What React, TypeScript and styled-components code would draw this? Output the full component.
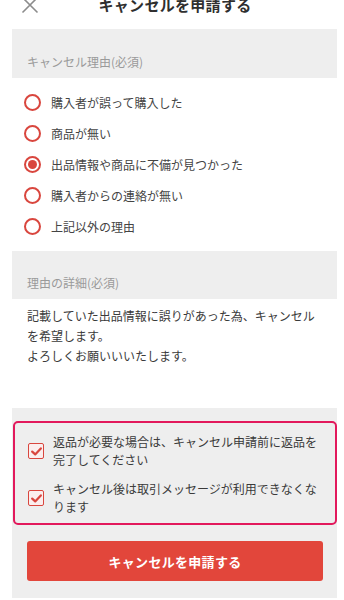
import React from "react";
import styled, { createGlobalStyle } from "styled-components";

const Global = createGlobalStyle`
  html, body { margin: 0; padding: 0; background: #fff; }
  body { font-family: "Noto Sans CJK JP", "Noto Sans", sans-serif; color: #333; overflow: hidden; }
`;

const Page = styled.div`
  width: 344px;
  height: 600px;
  overflow: hidden;
  background: #fff;
`;

const Header = styled.div`
  height: 10px;
  margin-bottom: 19px;
  display: flex;
  align-items: center;
  justify-content: center;
  position: relative;
`;

const CloseIcon = styled.svg`
  position: absolute;
  left: 21px;
  top: -4px;
`;

const Title = styled.h1`
  margin: 0 0 0 6px;
  font-size: 15px;
  line-height: 10px;
  font-weight: 700;
  color: #2f2f2f;
  letter-spacing: 0.3px;
`;

const Panel = styled.div`
  width: 325px;
  margin-left: 12px;
  display: flex;
  flex-direction: column;
`;

const SectionHead = styled.div<{ $h: number; $pt: number }>`
  background: #eeeeee;
  height: ${(p) => p.$h}px;
  box-sizing: border-box;
  padding: ${(p) => p.$pt}px 15px 0;
  font-size: 12px;
  line-height: 14px;
  color: #9a9a9a;
`;

const RadioList = styled.div`
  background: #fff;
  padding: 9px 15px;
  display: flex;
  flex-direction: column;
`;

const RadioRow = styled.label`
  height: 31px;
  display: flex;
  align-items: center;
  gap: 10px;
  font-size: 12px;
  color: #444;
`;

const Radio = styled.span<{ $checked?: boolean }>`
  width: 17px;
  height: 17px;
  box-sizing: border-box;
  border: 2px solid #d9463e;
  border-radius: 50%;
  display: flex;
  align-items: center;
  justify-content: center;
  margin-left: -3px;
  flex-shrink: 0;
  &::after {
    content: "";
    width: 9px;
    height: 9px;
    border-radius: 50%;
    background: #d9463e;
    display: ${(p) => (p.$checked ? "block" : "none")};
  }
`;

const Detail = styled.div`
  background: #fff;
  height: 109px;
  box-sizing: border-box;
  padding: 7px 14px 0 15px;
  font-size: 12px;
  line-height: 20px;
  color: #3a3a3a;
`;

const Footer = styled.div`
  background: #eeeeee;
  padding: 13px 0 17px;
  display: flex;
  flex-direction: column;
  gap: 16px;
`;

const NoticeBox = styled.div`
  border: 2.5px solid #e2195c;
  border-radius: 5px;
  padding: 10px 12px 7px 13px;
  display: flex;
  flex-direction: column;
  gap: 11px;
  margin-left: 1px;
`;

const CheckRow = styled.div`
  display: flex;
  align-items: center;
  gap: 9px;
  font-size: 12px;
  line-height: 18px;
  color: #3a3a3a;
`;

const Check = styled.span`
  width: 16px;
  height: 16px;
  box-sizing: border-box;
  border: 1.5px solid #d9463e;
  border-radius: 2px;
  background: #fbeeee;
  display: flex;
  align-items: center;
  justify-content: center;
  flex-shrink: 0;
`;

const Button = styled.button`
  margin: 0 14px 0 15px;
  height: 40px;
  border: none;
  border-radius: 3px;
  background: #e2463b;
  color: #fff;
  font-family: "Noto Sans CJK JP", sans-serif;
  font-size: 13px;
  font-weight: 700;
  letter-spacing: 0.3px;
`;

const reasons = [
  "購入者が誤って購入した",
  "商品が無い",
  "出品情報や商品に不備が見つかった",
  "購入者からの連絡が無い",
  "上記以外の理由",
];

const notices = [
  "返品が必要な場合は、キャンセル申請前に返品を完了してください",
  "キャンセル後は取引メッセージが利用できなくなります",
];

export default function App() {
  return (
    <Page>
      <Global />
      <Header>
        <CloseIcon width="18" height="18" viewBox="0 0 18 18">
          <path d="M1.5 1.5 L16.5 16.5 M16.5 1.5 L1.5 16.5" stroke="#8c8c8c" strokeWidth="1.6" fill="none" />
        </CloseIcon>
        <Title>キャンセルを申請する</Title>
      </Header>
      <Panel>
        <SectionHead $h={49} $pt={26}>キャンセル理由(必須)</SectionHead>
        <RadioList>
          {reasons.map((r, i) => (
            <RadioRow key={r}>
              <Radio $checked={i === 2} />
              {r}
            </RadioRow>
          ))}
        </RadioList>
        <SectionHead $h={48} $pt={25}>理由の詳細(必須)</SectionHead>
        <Detail>
          記載していた出品情報に誤りがあった為、キャンセルを希望します。
          <br />
          よろしくお願いいいたします。
        </Detail>
        <Footer>
          <NoticeBox>
            {notices.map((n) => (
              <CheckRow key={n}>
                <Check>
                  <svg width="11" height="9" viewBox="0 0 11 9">
                    <path d="M1.2 4.6 L4.2 7.4 L9.8 1.4" stroke="#d9463e" strokeWidth="2.2" fill="none" strokeLinecap="round" strokeLinejoin="round" />
                  </svg>
                </Check>
                <span>{n}</span>
              </CheckRow>
            ))}
          </NoticeBox>
          <Button>キャンセルを申請する</Button>
        </Footer>
      </Panel>
    </Page>
  );
}
